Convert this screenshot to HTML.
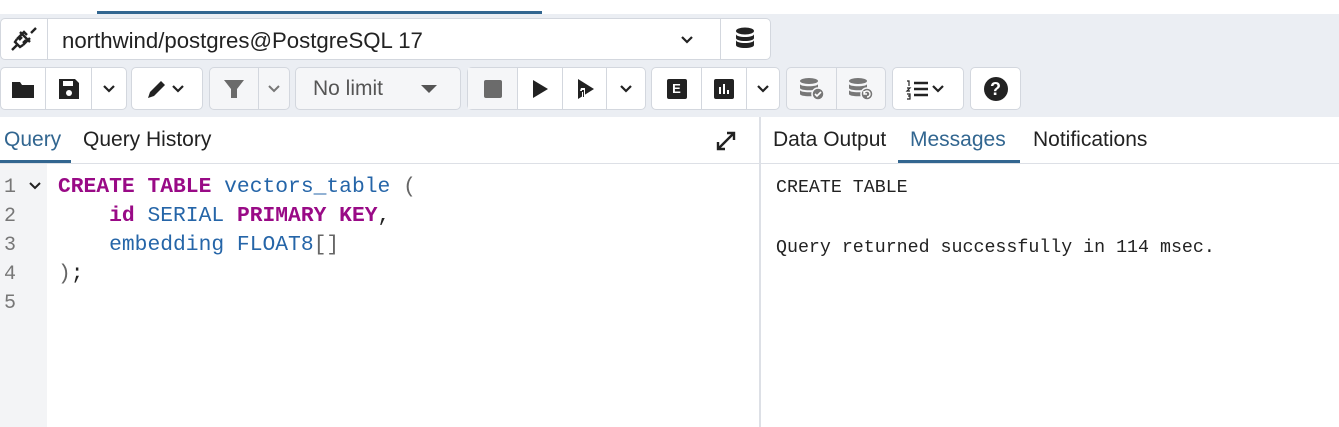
<!DOCTYPE html>
<html><head><style>
*{box-sizing:border-box;margin:0;padding:0}
body{width:1339px;height:427px;overflow:hidden;background:#ebeef3;font-family:"Liberation Sans",sans-serif;position:relative;color:#222}
.a{position:absolute}
.btn{position:absolute;top:67px;height:43px;background:#fff;border:1px solid #d3d7de;border-radius:5px;display:flex}
.btn>div{border-right:1px solid #d3d7de;display:flex;align-items:center;justify-content:center;height:100%}
.btn>div:last-child{border-right:none}
.dis{background:#f5f6f8}
.mono{font-family:"Liberation Mono",monospace}
.k{color:#990a86;font-weight:bold}
.b{color:#2565a8}
</style></head><body>
<div class="a" style="left:0;top:0;width:1339px;height:14px;background:#fff"></div>
<div class="a" style="left:97px;top:11px;width:445px;height:3px;background:#326690"></div>
<div class="a" style="left:0;top:18px;width:771px;height:42px;background:#fff;border:1px solid #d3d7de;border-radius:5px"></div>
<div class="a" style="left:47px;top:18px;width:1px;height:42px;background:#d3d7de"></div>
<div class="a" style="left:720px;top:18px;width:1px;height:42px;background:#d3d7de"></div>
<svg class="a" style="left:10px;top:26px" width="28" height="26" viewBox="0 0 28 26" fill="none" stroke="#222" stroke-width="2.4"><path d="M2 24l5-5M26 2l-5 5M10 6l10 10M7 13l7-7 3 3M13 19l7-7M12 11l-3 3M16 14l-3 3"/><path d="M7 13l-2 3 5 5 3-2"/></svg>
<div class="a" style="left:62px;top:28px;font-size:22.2px">northwind/postgres@PostgreSQL 17</div>
<svg class="a" style="left:680px;top:35px" width="14" height="10" viewBox="0 0 14 10"><path d="M2 2l5 5 5-5" stroke="#222" stroke-width="2.2" fill="none"/></svg>
<svg class="a" style="left:734px;top:27px" width="22" height="24" viewBox="0 0 22 24" fill="#222"><ellipse cx="11" cy="4" rx="9" ry="3.5"/><path d="M2 7c0 4 18 4 18 0v4c0 4-18 4-18 0zM2 13c0 4 18 4 18 0v5c0 4-18 4-18 0z"/></svg>
<div class="btn" style="left:0;width:127px"><div style="width:45px"><svg width="24" height="20"><path d="M1 3h8l2 3h12v13H1z" fill="#222"/></svg></div><div style="width:46px"><svg width="22" height="22"><path d="M1 1h16l4 4v16H1z" fill="#222"/><rect x="5" y="3" width="10" height="5" fill="#fff"/><circle cx="11" cy="15" r="3" fill="#fff"/></svg></div><div style="flex:1"><svg width="14" height="10"><path d="M2 2l5 5 5-5" stroke="#222" stroke-width="2.2" fill="none"/></svg></div></div>
<div class="btn" style="left:131px;width:72px"><div style="width:100%"><svg width="46" height="24"><path d="M4 21l2-6 11-11 4 4-11 11z" fill="#222"/><path d="M29 9l5 5 5-5" stroke="#222" stroke-width="2.2" fill="none"/></svg></div></div>
<div class="btn dis" style="left:209px;width:81px"><div style="width:49px"><svg width="22" height="22"><path d="M1 2h20l-7 9v9h-6v-9z" fill="#6b6b6b"/></svg></div><div style="flex:1"><svg width="14" height="10"><path d="M2 2l5 5 5-5" stroke="#777" stroke-width="2" fill="none"/></svg></div></div>
<div class="btn dis" style="left:295px;width:166px"><div style="width:100%;justify-content:flex-start;padding-left:17px;font-size:21px;color:#555">No limit<svg style="margin-left:38px" width="16" height="10"><path d="M0 1h16l-8 8z" fill="#555"/></svg></div></div>
<div class="btn" style="left:467px;width:179px"><div style="width:50px" class="dis"><div style="width:18px;height:18px;background:#6b6b6b;border-radius:2px"></div></div><div style="width:45px"><svg width="18" height="20"><path d="M2 1l15 9-15 9z" fill="#222"/></svg></div><div style="width:44px"><svg width="22" height="22"><path d="M4 1l16 10-16 10z" fill="#222"/><path d="M7 10h4v10h-3v-7H6z" fill="#fff"/><path d="M8 12h2v7H9v-5H8z" fill="#222"/></svg></div><div style="flex:1"><svg width="14" height="10"><path d="M2 2l5 5 5-5" stroke="#222" stroke-width="2.2" fill="none"/></svg></div></div>
<div class="btn" style="left:651px;width:129px"><div style="width:50px"><div style="width:20px;height:20px;background:#222;border-radius:2px;color:#fff;font-size:13px;font-weight:bold;text-align:center;line-height:20px">E</div></div><div style="width:45px"><svg width="20" height="20"><rect width="20" height="20" rx="2" fill="#222"/><path d="M6 8v7M10 5v10M14 11v4" stroke="#fff" stroke-width="2"/></svg></div><div style="flex:1"><svg width="14" height="10"><path d="M2 2l5 5 5-5" stroke="#222" stroke-width="2.2" fill="none"/></svg></div></div>
<div class="btn dis" style="left:786px;width:100px"><div style="width:50px"><svg width="26" height="24"><ellipse cx="10" cy="4" rx="9" ry="3" fill="#777"/><path d="M1 7c0 3 18 3 18 0v4c0 3-18 3-18 0zM1 13c0 3 18 3 18 0v4c0 3-18 3-18 0z" fill="#777"/><circle cx="19" cy="17" r="6" fill="#777" stroke="#f5f6f8" stroke-width="1.5"/><path d="M16 17l2 2 4-4" stroke="#fff" stroke-width="1.6" fill="none"/></svg></div><div style="flex:1"><svg width="26" height="24"><ellipse cx="10" cy="4" rx="9" ry="3" fill="#777"/><path d="M1 7c0 3 18 3 18 0v4c0 3-18 3-18 0zM1 13c0 3 18 3 18 0v4c0 3-18 3-18 0z" fill="#777"/><circle cx="19" cy="17" r="6" fill="#777" stroke="#f5f6f8" stroke-width="1.5"/><path d="M16 17a3 3 0 1 1 3 3M16 14v3h3" stroke="#fff" stroke-width="1.4" fill="none"/></svg></div></div>
<div class="btn" style="left:892px;width:72px"><div style="width:100%"><svg width="46" height="22"><path d="M2 3h2v5M2 10h3l-3 3h3M2 16h3v5H2M3 18h2" stroke="#222" stroke-width="1.2" fill="none"/><path d="M9 5h14M9 11h14M9 17h14" stroke="#222" stroke-width="2.4"/><path d="M28 8l5 5 5-5" stroke="#222" stroke-width="2.2" fill="none"/></svg></div></div>
<div class="btn" style="left:970px;width:51px"><div style="width:100%"><div style="width:24px;height:24px;border-radius:50%;background:#222;color:#fff;font-weight:bold;font-size:18px;text-align:center;line-height:24px">?</div></div></div>
<div class="a" style="left:0;top:117px;width:1339px;height:310px;background:#fff"></div>
<div class="a" style="left:0;top:163px;width:1339px;height:1px;background:#dde0e6"></div>
<div class="a" style="left:759px;top:117px;width:2px;height:310px;background:#dde0e6"></div>
<div class="a" style="left:0;top:164px;width:47px;height:263px;background:#f3f4f6"></div>
<div class="a" style="left:4px;top:128px;font-size:21px;color:#326690">Query</div>
<div class="a" style="left:0;top:160px;width:71px;height:3px;background:#326690"></div>
<div class="a" style="left:83px;top:128px;font-size:21px">Query History</div>
<svg class="a" style="left:715px;top:130px" width="22" height="22"><path d="M3 19L19 3M12 3h7v7M3 12v7h7" stroke="#222" stroke-width="2.4" fill="none"/></svg>
<div class="a" style="left:773px;top:128px;font-size:21px">Data Output</div>
<div class="a" style="left:910px;top:128px;font-size:21px;color:#326690">Messages</div>
<div class="a" style="left:898px;top:160px;width:122px;height:3px;background:#326690"></div>
<div class="a" style="left:1033px;top:128px;font-size:21px">Notifications</div>
<div class="a mono" style="left:4px;top:173px;font-size:20px;line-height:29px;color:#777">1<br>2<br>3<br>4<br>5</div>
<svg class="a" style="left:29px;top:182px" width="12" height="8"><path d="M1 1l5 5 5-5" stroke="#222" stroke-width="2" fill="none"/></svg>
<div class="a mono" style="left:58px;top:173px;font-size:21.3px;line-height:29px;white-space:pre;color:#222"><span class="k">CREATE TABLE</span> <span class="b">vectors_table</span> <span style="color:#666">(</span>
    <span class="k">id</span> <span class="b">SERIAL</span> <span class="k">PRIMARY KEY</span>,
    <span class="b">embedding FLOAT8</span><span style="color:#666">[]</span>
<span style="color:#666">)</span>;</div>
<div class="a mono" style="left:776px;top:173px;font-size:18.3px;line-height:30px;white-space:pre;color:#222">CREATE TABLE

Query returned successfully in 114 msec.</div>
</body></html>
